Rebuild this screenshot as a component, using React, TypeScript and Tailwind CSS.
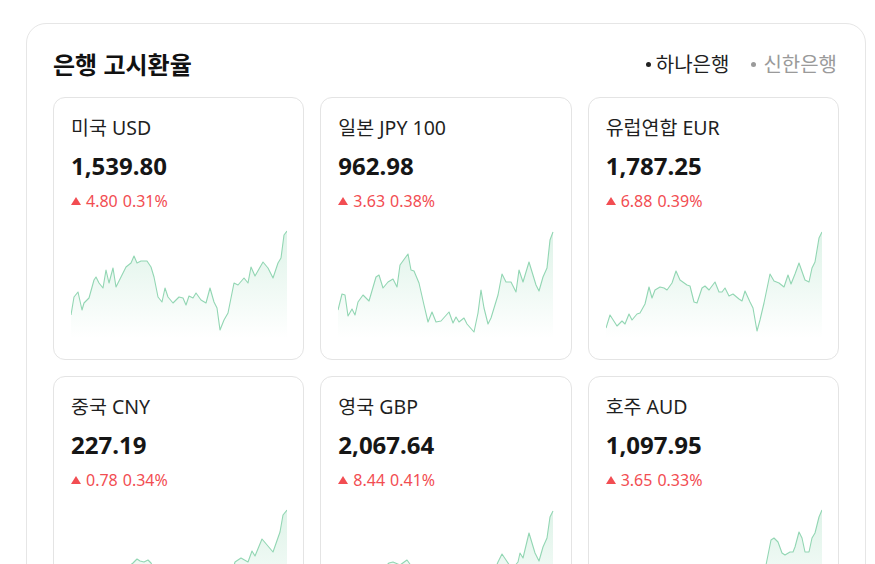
import { useId } from "react";

type Pt = [number, number];

const CHART_W = 216;
const CHART_H = 110;

const rates: {
  name: string;
  value: string;
  diff: string;
  pct: string;
  points: Pt[];
}[] = [
  {
    name: "미국 USD",
    value: "1,539.80",
    diff: "4.80",
    pct: "0.31%",
    points: [
      [0, 87], [3, 69], [7, 64], [11, 82], [13, 75], [18, 70], [23, 52], [25, 49], [28, 55], [32, 60],
      [35, 42], [38, 55], [42, 40], [45, 59], [52, 45], [55, 39], [60, 35], [63, 28], [66, 35], [70, 33],
      [76, 33], [80, 39], [83, 49], [87, 69], [91, 74], [94, 60], [97, 69], [102, 75], [108, 69], [112, 70],
      [115, 77], [118, 68], [122, 70], [125, 65], [130, 72], [135, 75], [139, 60], [143, 74], [146, 80],
      [149, 102], [153, 92], [157, 85], [163, 55], [167, 57], [173, 50], [177, 55], [180, 39], [184, 48],
      [192, 34], [197, 40], [202, 50], [207, 35], [210, 30], [213, 7], [216, 3],
    ],
  },
  {
    name: "일본 JPY 100",
    value: "962.98",
    diff: "3.63",
    pct: "0.38%",
    points: [
      [0, 82], [4, 66], [7, 67], [10, 88], [14, 81], [17, 87], [20, 74], [25, 67], [31, 73], [38, 49],
      [41, 47], [45, 60], [50, 54], [55, 51], [59, 59], [62, 37], [70, 26], [73, 42], [76, 43], [81, 55],
      [86, 77], [90, 94], [94, 84], [98, 94], [103, 93], [111, 84], [115, 95], [118, 89], [121, 94],
      [126, 90], [129, 96], [136, 104], [140, 85], [143, 62], [146, 80], [150, 96], [153, 90], [160, 67],
      [164, 46], [168, 54], [173, 54], [178, 64], [181, 42], [185, 54], [191, 34], [198, 57], [201, 63],
      [205, 49], [209, 40], [212, 12], [215, 4],
    ],
  },
  {
    name: "유럽연합 EUR",
    value: "1,787.25",
    diff: "6.88",
    pct: "0.39%",
    points: [
      [0, 100], [4, 87], [11, 98], [16, 93], [19, 96], [23, 86], [26, 92], [31, 86], [34, 85], [39, 76],
      [43, 59], [46, 70], [49, 62], [54, 59], [58, 60], [61, 62], [66, 55], [70, 43], [74, 52], [81, 57],
      [84, 58], [88, 74], [91, 75], [96, 60], [99, 58], [103, 62], [109, 54], [113, 64], [116, 64],
      [119, 60], [123, 68], [127, 66], [133, 71], [136, 73], [139, 63], [144, 74], [147, 80], [151, 103],
      [154, 92], [158, 75], [164, 46], [168, 53], [173, 55], [178, 59], [182, 47], [185, 56], [189, 46],
      [193, 35], [199, 52], [203, 54], [206, 40], [209, 34], [213, 10], [216, 4],
    ],
  },
  {
    name: "중국 CNY",
    value: "227.19",
    diff: "0.78",
    pct: "0.34%",
    points: [
      [0, 98], [5, 86], [10, 90], [16, 80], [22, 84], [28, 74], [34, 78], [40, 70], [46, 74], [52, 64],
      [57, 60], [62, 56], [66, 52], [69, 54], [73, 55], [77, 53], [80, 56], [86, 68], [92, 82], [98, 78],
      [104, 88], [110, 84], [116, 90], [122, 86], [128, 92], [134, 88], [140, 96], [146, 84], [150, 100],
      [155, 90], [160, 70], [164, 55], [170, 51], [177, 55], [181, 44], [184, 49], [191, 32], [202, 45],
      [209, 25], [212, 8], [216, 3],
    ],
  },
  {
    name: "영국 GBP",
    value: "2,067.64",
    diff: "8.44",
    pct: "0.41%",
    points: [
      [0, 90], [6, 78], [12, 86], [18, 74], [24, 80], [30, 68], [36, 72], [42, 62], [47, 60], [51, 56],
      [55, 55], [62, 58], [69, 53], [74, 60], [80, 72], [88, 88], [96, 84], [104, 94], [112, 88],
      [120, 96], [128, 90], [136, 102], [142, 80], [148, 92], [154, 70], [160, 55], [164, 47], [168, 53],
      [174, 62], [180, 55], [182, 46], [185, 51], [191, 26], [197, 46], [201, 54], [205, 40], [209, 31],
      [212, 10], [215, 4],
    ],
  },
  {
    name: "호주 AUD",
    value: "1,097.95",
    diff: "3.65",
    pct: "0.33%",
    points: [
      [0, 100], [6, 90], [12, 96], [18, 86], [24, 90], [30, 80], [36, 76], [42, 66], [48, 70], [54, 64],
      [60, 66], [66, 60], [72, 62], [78, 68], [84, 76], [90, 74], [96, 66], [102, 70], [108, 64],
      [114, 72], [120, 70], [126, 76], [132, 74], [138, 68], [144, 78], [150, 92], [154, 100], [160, 58],
      [165, 33], [168, 31], [172, 35], [176, 46], [179, 48], [184, 45], [187, 45], [189, 40], [193, 25],
      [196, 31], [199, 45], [203, 45], [206, 31], [209, 26], [213, 10], [216, 3],
    ],
  },
];

function Sparkline({ points }: { points: Pt[] }) {
  const gid = useId().replace(/:/g, "");
  const line = points.map(([x, y], i) => `${i === 0 ? "M" : "L"}${x},${y}`).join(" ");
  const last = points[points.length - 1];
  const area = `${line} L${last[0]},${CHART_H} L${points[0][0]},${CHART_H} Z`;

  return (
    <svg
      viewBox={`0 0 ${CHART_W} ${CHART_H}`}
      width={CHART_W}
      height={CHART_H}
      className="block"
    >
      <defs>
        <linearGradient id={gid} x1="0" y1="0" x2="0" y2="1">
          <stop offset="0%" stopColor="#3cb878" stopOpacity={0.17} />
          <stop offset="100%" stopColor="#3cb878" stopOpacity={0} />
        </linearGradient>
      </defs>
      <path d={area} fill={`url(#${gid})`} />
      <path d={line} fill="none" stroke="#92d6b3" strokeWidth={1.1} strokeLinejoin="round" />
    </svg>
  );
}

function RateCard({ rate }: { rate: (typeof rates)[number] }) {
  return (
    <div className="rounded-[12px] border border-[#e4e4e4] bg-white px-[17px] pt-[18px] pb-[21px]">
      <div className="text-[19.5px] leading-[24px] text-[#1f1f1f]">{rate.name}</div>
      <div className="mt-[11px] text-[24px] leading-[30px] font-bold text-[#161616]">
        {rate.value}
      </div>
      <div className="mt-[9px] flex items-center text-[16px] leading-[22px] text-[#f24d52]">
        <span className="mr-[5px] inline-block h-0 w-0 border-x-[5px] border-b-[8px] border-x-transparent border-b-[#f24d52]" />
        <span>{rate.diff}</span>
        <span className="ml-[5px]">{rate.pct}</span>
      </div>
      <div className="mt-[16px]">
        <Sparkline points={rate.points} />
      </div>
    </div>
  );
}

export default function App() {
  return (
    <div
      className="min-h-screen bg-white pt-[23px] pl-[26px]"
      style={{ fontFamily: '"Noto Sans", "Noto Sans CJK KR", sans-serif' }}
    >
      <div className="w-[840px] rounded-[20px] border border-[#e6e6e6] bg-white px-[26px] pt-[25px] pb-[26px]">
        <div className="mb-[17px] flex h-[31px] items-center justify-between">
          <h1 className="text-[24px] leading-[30px] font-bold text-[#111]">은행 고시환율</h1>
          <div className="flex items-center gap-[22px] pr-[2px] text-[20px] leading-[26px]">
            <button className="flex items-center text-[#1f1f1f]">
              <span className="mr-[5px] inline-block h-[5px] w-[5px] rounded-full bg-[#222]" />
              하나은행
            </button>
            <button className="flex items-center text-[#9a9a9a]">
              <span className="mr-[7px] inline-block h-[5px] w-[5px] rounded-full bg-[#9a9a9a]" />
              신한은행
            </button>
          </div>
        </div>
        <div className="grid grid-cols-3 gap-[16px]">
          {rates.map((r) => (
            <RateCard key={r.name} rate={r} />
          ))}
        </div>
      </div>
    </div>
  );
}
